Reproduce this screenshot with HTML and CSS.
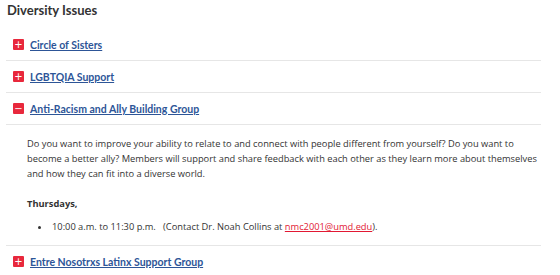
FILE: index.html
```html
<!DOCTYPE html>
<html lang="en">
<head>
  <meta charset="UTF-8" />
  <title>Diversity Issues</title>
  <link rel="stylesheet" href="styles.css">
</head>
<body>
  <div class="container">
    <h2>Diversity Issues</h2>

    <div class="accordion">
      <div class="item">
        <div class="item-head">
          <span class="toggle">+</span>
          <a href="#">Circle of Sisters</a>
        </div>
      </div>

      <div class="item">
        <div class="item-head">
          <span class="toggle">+</span>
          <a href="#">LGBTQIA Support</a>
        </div>
      </div>

      <div class="item open">
        <div class="item-head">
          <span class="toggle">&minus;</span>
          <a href="#">Anti-Racism and Ally Building Group</a>
        </div>
        <div class="item-body">
          <p>Do you want to improve your ability to relate to and connect with people different from yourself? Do you want to<br>
          become a better ally? Members will support and share feedback with each other as they learn more about themselves<br>
          and how they can fit into a diverse world.</p>
          <p class="day">Thursdays,</p>
          <ul>
            <li>10:00 a.m. to 11:30 p.m. &nbsp; (Contact Dr. Noah Collins at <a class="mail" href="#">nmc2001@umd.edu</a>).</li>
          </ul>
        </div>
      </div>

      <div class="item">
        <div class="item-head">
          <span class="toggle">+</span>
          <a href="#">Entre Nosotrxs Latinx Support Group</a>
        </div>
      </div>
    </div>
  </div>
</body>
</html>
```

FILE: styles.css
```css
body {
  margin: 0;
  background: #fff;
  color: #333;
  font-family: 'Open Sans', 'Liberation Sans', sans-serif;
}

.container {
  width: 535px;
  padding: 0 0 0 6px;
}

h2 {
  margin: 0;
  padding: 2px 0 0 1px;
  height: 27px;
  font-family: Lato, 'Liberation Sans', sans-serif;
  font-size: 13px;
  font-weight: 700;
  color: #333;
}

.item {
  border-bottom: 1px solid #e6e6e6;
}

.item-head {
  display: flex;
  align-items: center;
  gap: 6px;
  height: 31px;
  padding-left: 7px;
}

.toggle {
  display: flex;
  align-items: center;
  justify-content: center;
  width: 11px;
  height: 11px;
  border-radius: 1px;
  background: #e8283c;
  color: #fff;
  font-family: 'DejaVu Sans', sans-serif;
  font-size: 10px;
  line-height: 1;
}

.item-head a {
  font-family: Lato, 'Liberation Sans', sans-serif;
  font-size: 10.5px;
  font-weight: 700;
  color: #2d5597;
  text-decoration: underline;
}

.item.open .item-head {
  border-bottom: 1px solid #e6e6e6;
}

.item-body {
  padding: 11px 0 11px 21px;
  font-size: 9.3px;
  line-height: 15px;
  white-space: nowrap;
}

.item-body p {
  margin: 0 0 15px;
}

.item-body .day {
  font-weight: 700;
  margin-bottom: 8px;
}

.item-body ul {
  margin: 0;
  padding-left: 24px;
}

.item-body li {
  padding-left: 1px;
}

.mail {
  color: #e21833;
  text-decoration: underline;
}
```
